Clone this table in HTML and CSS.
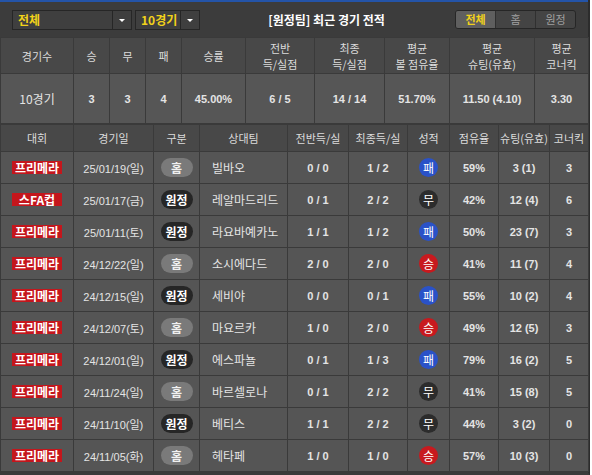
FILE: index.html
```html
<!DOCTYPE html>
<html>
<head>
    <title>최근 경기 전적</title>
    <link rel="stylesheet" href="styles.css">
</head>
<body>
    <div class="panel">
        <!-- 상단 필터 -->
        <div class="topbar">
            <div class="select wide">
                <span class="select-text">전체</span>
                <span class="select-arrow"></span>
            </div>
            <div class="select narrow">
                <span class="select-text">10경기</span>
                <span class="select-arrow"></span>
            </div>
            <div class="title">[원정팀] 최근 경기 전적</div>
            <div class="toggle">
                <span class="toggle-btn active">전체</span>
                <span class="toggle-btn">홈</span>
                <span class="toggle-btn">원정</span>
            </div>
        </div>

        <!-- 요약 -->
        <table class="summary">
            <colgroup>
                <col style="width:73px"><col style="width:36px"><col style="width:36px"><col style="width:36px">
                <col style="width:64px"><col style="width:69px"><col style="width:70px"><col style="width:65px">
                <col style="width:85px"><col style="width:54px">
            </colgroup>
            <thead>
                <tr>
                    <th>경기수</th>
                    <th>승</th>
                    <th>무</th>
                    <th>패</th>
                    <th>승률</th>
                    <th>전반<br>득/실점</th>
                    <th>최종<br>득/실점</th>
                    <th>평균<br>볼 점유율</th>
                    <th>평균<br>슈팅(유효)</th>
                    <th>평균<br>코너킥</th>
                </tr>
            </thead>
            <tbody>
                <tr>
                    <td>10경기</td>
                    <td>3</td>
                    <td>3</td>
                    <td>4</td>
                    <td>45.00%</td>
                    <td>6 / 5</td>
                    <td>14 / 14</td>
                    <td>51.70%</td>
                    <td>11.50 (4.10)</td>
                    <td>3.30</td>
                </tr>
            </tbody>
        </table>

        <!-- 경기 목록 -->
        <table class="games">
            <colgroup>
                <col style="width:73px"><col style="width:80px"><col style="width:46px"><col style="width:88px">
                <col style="width:61px"><col style="width:59px"><col style="width:42px"><col style="width:49px">
                <col style="width:51px"><col style="width:39px">
            </colgroup>
            <thead>
                <tr>
                    <th>대회</th>
                    <th>경기일</th>
                    <th>구분</th>
                    <th>상대팀</th>
                    <th>전반득/실</th>
                    <th>최종득/실</th>
                    <th>성적</th>
                    <th>점유율</th>
                    <th>슈팅(유효)</th>
                    <th>코너킥</th>
                </tr>
            </thead>
            <tbody id="games-body"></tbody>
        </table>
    </div>

<script>
const partidos = [
    ['프리메라', '25/01/19(일)', '홈', '빌바오', '0 / 0', '1 / 2', '패', '59%', '3 (1)', '3'],
    ['스FA컵', '25/01/17(금)', '원정', '레알마드리드', '0 / 1', '2 / 2', '무', '42%', '12 (4)', '6'],
    ['프리메라', '25/01/11(토)', '원정', '라요바예카노', '1 / 1', '1 / 2', '패', '50%', '23 (7)', '3'],
    ['프리메라', '24/12/22(일)', '홈', '소시에다드', '2 / 0', '2 / 0', '승', '41%', '11 (7)', '4'],
    ['프리메라', '24/12/15(일)', '원정', '세비야', '0 / 0', '0 / 1', '패', '55%', '10 (2)', '4'],
    ['프리메라', '24/12/07(토)', '홈', '마요르카', '1 / 0', '2 / 0', '승', '49%', '12 (5)', '3'],
    ['프리메라', '24/12/01(일)', '원정', '에스파뇰', '0 / 1', '1 / 3', '패', '79%', '16 (2)', '5'],
    ['프리메라', '24/11/24(일)', '홈', '바르셀로나', '0 / 1', '2 / 2', '무', '41%', '15 (8)', '5'],
    ['프리메라', '24/11/10(일)', '원정', '베티스', '1 / 1', '2 / 2', '무', '44%', '3 (2)', '0'],
    ['프리메라', '24/11/05(화)', '홈', '헤타페', '1 / 0', '1 / 0', '승', '57%', '10 (3)', '0']
];

const resultado = { '승': 'win', '무': 'draw', '패': 'loss' };

function renderPartidos() {
    const tbody = document.getElementById('games-body');
    tbody.innerHTML = '';

    partidos.forEach(p => {
        const tr = document.createElement('tr');
        tr.innerHTML = `
            <td><span class="league">${p[0]}</span></td>
            <td class="date">${p[1]}</td>
            <td><span class="venue ${p[2] === '홈' ? 'home' : 'away'}">${p[2]}</span></td>
            <td class="team">${p[3]}</td>
            <td>${p[4]}</td>
            <td>${p[5]}</td>
            <td><span class="result ${resultado[p[6]]}">${p[6]}</span></td>
            <td>${p[7]}</td>
            <td>${p[8]}</td>
            <td>${p[9]}</td>
        `;
        tbody.appendChild(tr);
    });
}

renderPartidos();
</script>
</body>
</html>
```

FILE: styles.css
```css
body { margin: 0; background: #ffffff; font-family: "Liberation Sans", "Noto Sans CJK KR", sans-serif; }
.panel { width: 588px; background: #3c3c3c; border-right: 2px solid #2c2c2c; border-bottom: 4px solid #3a3a3a; }

.topbar { height: 37px; border-top: 2px solid #2454a8; display: flex; align-items: center; padding: 0 12px; box-sizing: border-box; }
.select { height: 20px; display: flex; border: 1px solid #262626; background: #3f3f3f; box-sizing: border-box; }
.select.wide { width: 120px; }
.select.narrow { width: 65px; margin-left: 3px; }
.select-text { flex: 1; color: #f2d21a; font-weight: bold; font-size: 12px; line-height: 18px; padding-left: 5px; font-family: "Noto Sans CJK KR", sans-serif; }
.select-arrow { width: 18px; border-left: 1px solid #262626; position: relative; }
.select-arrow::after { content: ""; position: absolute; left: 6px; top: 8px; border-left: 3px solid transparent; border-right: 3px solid transparent; border-top: 3px solid #ffffff; }
.title { flex: 1; text-align: center; color: #ffffff; font-weight: bold; font-size: 12px; font-family: "Noto Sans CJK KR", sans-serif; padding-right: 2px; }
.toggle { display: flex; height: 19px; border: 1px solid #262626; border-radius: 3px; background: #444444; overflow: hidden; box-sizing: border-box; }
.toggle-btn { width: 39px; text-align: center; font-size: 11px; line-height: 17px; color: #a0a0a0; font-family: "Noto Sans CJK KR", sans-serif; border-left: 1px solid #303030; }
.toggle-btn:first-child { border-left: none; }
.toggle-btn.active { background: #5f5f5f; color: #f2d21a; font-weight: bold; }

table { width: 588px; border-collapse: collapse; table-layout: fixed; font-family: "Liberation Sans", "Noto Sans CJK KR", sans-serif; }
td, th { border: 1px solid #3a3a3a; text-align: center; padding: 0; color: #e4e4e4; }
th { font-weight: normal; font-size: 11px; color: #dcdcdc; font-family: "Noto Sans CJK KR", sans-serif; }
td { font-weight: bold; font-size: 11px; }

.summary th { background: #484848; height: 35px; line-height: 16px; }
.summary td { background: #565656; height: 49px; }
.summary td:first-child { font-family: "Noto Sans CJK KR", sans-serif; font-weight: normal; font-size: 12px; }

.games th { background: #484848; height: 26px; }
.games td { background: #555555; height: 31px; }
.games td.date { font-weight: normal; }
.games td.team { text-align: left; padding-left: 12px; font-weight: normal; font-size: 12px; font-family: "Noto Sans CJK KR", sans-serif; }

.league { display: inline-block; width: 50px; height: 13px; line-height: 13px; background: #c4161c; color: #ffffff; font-size: 12px; font-weight: bold; font-family: "Noto Sans CJK KR", sans-serif; vertical-align: middle; }
.venue { display: inline-block; width: 32px; height: 19px; line-height: 19px; border-radius: 10px; font-size: 12px; font-weight: bold; font-family: "Noto Sans CJK KR", sans-serif; vertical-align: middle; }
.venue.home { background: #7a7a7a; color: #f0f0f0; }
.venue.away { background: #262626; color: #ffffff; }
.result { display: inline-block; width: 19px; height: 19px; line-height: 19px; border-radius: 50%; font-size: 12px; font-weight: normal; color: #ffffff; font-family: "Noto Sans CJK KR", sans-serif; vertical-align: middle; }
.result.win { background: #c8191e; }
.result.draw { background: #2c2c2c; }
.result.loss { background: #2a52c8; }
```
